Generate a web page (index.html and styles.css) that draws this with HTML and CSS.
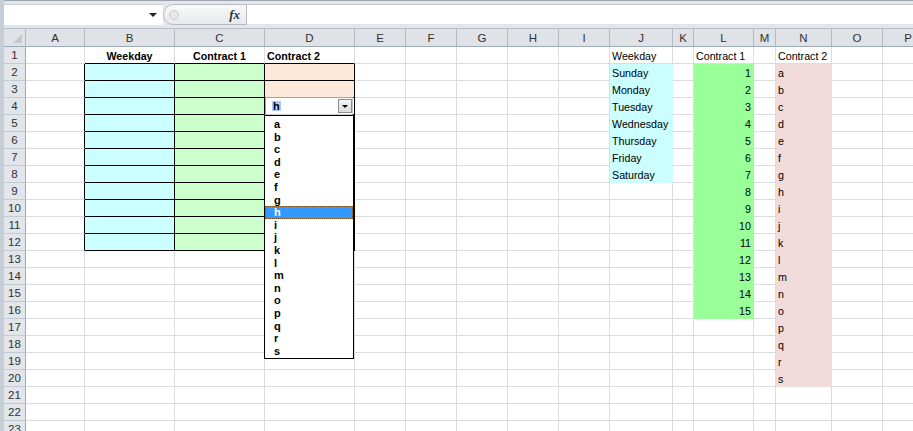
FILE: index.html
```html
<!DOCTYPE html>
<html lang="en">
<head>
  <meta charset="UTF-8" />
  <title>Sheet1</title>
  <link rel="stylesheet" href="styles.css">
</head>
<body>

  <div class="window">
    <div class="formula-bar">
      <div class="name-box"><span class="nb-arrow"></span></div>
      <div class="fx-area"><span class="grip"></span><span class="fx">fx</span></div>
      <div class="formula-input"></div>
    </div>

    <div class="sheet">
      <table class="grid" id="grid"></table>
    </div>
  </div>

  <script>
    const cols = "ABCDEFGHIJKLMNOP".split("");
    const rowCount = 23;
    const days = ["Sunday", "Monday", "Tuesday", "Wednesday", "Thursday", "Friday", "Saturday"];
    const letters = "abcdefghijklmnopqrs".split("");

    const cells = {
      B1: { text: "Weekday", cls: "bold center bb" },
      C1: { text: "Contract 1", cls: "bold center bb" },
      D1: { text: "Contract 2", cls: "bold bb" },
      J1: { text: "Weekday" },
      L1: { text: "Contract 1" },
      N1: { text: "Contract 2" }
    };

    // bordered input table B2:D12
    for (let r = 2; r <= 12; r++) {
      cells["A" + r] = { cls: "br" };
      cells["B" + r] = { cls: "box cyan-lt" };
      cells["C" + r] = { cls: "box green-lt" };
      cells["D" + r] = { cls: "box peach" };
    }
    cells.D4 = { cls: "box open" };

    // lookup lists on the right
    days.forEach((d, i) => cells["J" + (i + 2)] = { text: d, cls: "fill-cyan" });
    for (let n = 1; n <= 15; n++) cells["L" + (n + 1)] = { text: n, cls: "fill-green num" };
    letters.forEach((l, i) => cells["N" + (i + 2)] = { text: l, cls: "fill-pink" });

    function dropdownHtml() {
      const items = letters.map(l =>
        `<li class="${l === "h" ? "picked" : ""}">${l}</li>`).join("");
      return `
        <div class="dd">
          <div class="dd-control">
            <span class="dd-value">h</span>
            <span class="dd-btn"><span class="tri"></span></span>
          </div>
          <ul class="dd-list">${items}</ul>
        </div>`;
    }

    function buildGrid() {
      const grid = document.getElementById("grid");
      let html = '<colgroup><col class="w-rh">';
      cols.forEach(c => html += `<col class="w-${c}">`);
      html += "</colgroup>";

      html += '<tr class="col-head"><th class="corner"><span class="corner-tri"></span></th>';
      cols.forEach(c => html += `<th>${c}</th>`);
      html += "</tr>";

      for (let r = 1; r <= rowCount; r++) {
        html += `<tr><th class="rh">${r}</th>`;
        cols.forEach(c => {
          const cell = cells[c + r] || {};
          const inner = (c + r === "D4") ? dropdownHtml() : (cell.text ?? "");
          html += `<td class="${cell.cls || ""}">${inner}</td>`;
        });
        html += "</tr>";
      }
      grid.innerHTML = html;
    }

    buildGrid();
  </script>

</body>
</html>
```

FILE: styles.css
```css
body {
  margin: 0;
  font-family: "Liberation Sans", Arial, sans-serif;
  background-color: #ffffff;
  overflow: hidden;
}

.window {
  width: 913px;
  height: 431px;
  overflow: hidden;
  box-sizing: border-box;
  border-left: 4px solid #c6ced8;
}

/* formula bar */
.formula-bar {
  display: flex;
  height: 29px;
  box-sizing: border-box;
  padding: 3px 0;
  background-color: #e3e6ea;
  border-top: 1px solid #9ca5b0;
  border-bottom: 1px solid #b8bec6;
}

.name-box {
  width: 159px;
  background: #ffffff;
  border-top: 1px solid #c9ced4;
  position: relative;
}

.nb-arrow {
  position: absolute;
  right: 6px;
  top: 8px;
  border-left: 4px solid transparent;
  border-right: 4px solid transparent;
  border-top: 4px solid #222;
}

.fx-area {
  width: 84px;
  display: flex;
  align-items: center;
  box-sizing: border-box;
  background: linear-gradient(#f8f9fa, #e6e9ec);
  border: 1px solid #b5bbc3;
  border-radius: 11px 0 0 11px;
}

.grip {
  width: 8px;
  height: 8px;
  margin-left: 5px;
  border-radius: 50%;
  background: #e8e8e8;
  border: 1px solid #c9c9c9;
}

.fx {
  margin-left: auto;
  margin-right: 6px;
  font: italic bold 13px "Liberation Serif", serif;
  color: #333;
}

.formula-input {
  flex-grow: 1;
  background: #ffffff;
  border-top: 1px solid #c0c5cc;
  border-bottom: 1px solid #dfe2e6;
}

/* sheet grid */
.sheet {
  height: 402px;
  overflow: hidden;
}

.grid {
  border-collapse: separate;
  border-spacing: 0;
  table-layout: fixed;
  width: 930px;
  font-size: 10.7px;
}

.w-rh { width: 22px; }
.w-A { width: 59px; }
.w-B, .w-C, .w-D { width: 90px; }
.w-E, .w-F, .w-G, .w-H, .w-I { width: 51px; }
.w-J { width: 63px; }
.w-K { width: 21px; }
.w-L { width: 60px; }
.w-M { width: 22px; }
.w-N { width: 56px; }
.w-O, .w-P { width: 51px; }

.grid tr {
  height: 17px;
}

.grid tr.col-head {
  height: 18px;
}

.grid th {
  padding: 0;
  font-size: 11.5px;
  font-weight: normal;
  color: #303030;
  background: #dfe3e8;
  border-right: 1px solid #b3bac3;
  border-bottom: 1px solid #9eaab8;
  text-align: center;
  vertical-align: middle;
  overflow: hidden;
}

.grid th.rh {
  background: #e2e6eb;
  border-right: 1px solid #9eaab8;
  border-bottom: 1px solid #c4cad2;
}

.grid th.corner {
  position: relative;
}

.corner-tri {
  position: absolute;
  right: 3px;
  bottom: 3px;
  border-left: 9px solid transparent;
  border-bottom: 9px solid #c3c8ce;
}

.grid td {
  padding: 0 2px;
  line-height: 13px;
  color: #000;
  white-space: nowrap;
  overflow: hidden;
  vertical-align: bottom;
  border-right: 1px solid #dadcdd;
  border-bottom: 1px solid #dadcdd;
}

.bold { font-weight: bold; }
.center { text-align: center; }
.num { text-align: right; }

/* black borders of the entry table */
.grid td.bb { border-bottom-color: #000; }
.grid td.br { border-right-color: #000; }
.grid td.box {
  border-right-color: #000;
  border-bottom-color: #000;
}

.cyan-lt { background: #ccffff; }
.green-lt { background: #ccffcc; }
.peach { background: #fde9d9; }

.grid td.fill-cyan {
  background: #ccffff;
  border-color: #ccffff;
}

.grid td.fill-green {
  background: #99ff99;
  border-color: #99ff99;
}

.grid td.fill-pink {
  background: #f2dcdb;
  border-color: #f2dcdb;
}

/* dropdown in D4 */
.grid td.open {
  padding: 0;
  overflow: visible;
  background: #ffffff;
}

.dd {
  position: relative;
  height: 16px;
}

.dd-control {
  position: absolute;
  left: 0;
  top: -1px;
  width: 88px;
  height: 18px;
  box-sizing: border-box;
  background: #ffffff;
  border: 1px solid #a3a3a3;
  border-right-color: #c9c9c9;
  border-bottom-color: #c9c9c9;
}

.dd-value {
  position: absolute;
  left: 6px;
  top: 3px;
  padding: 0 1px;
  font-size: 11px;
  font-weight: bold;
  line-height: 10px;
  background: #a9cdf6;
}

.dd-btn {
  position: absolute;
  right: 0;
  top: 1px;
  width: 14px;
  height: 14px;
  box-sizing: border-box;
  background: linear-gradient(#f4f4f4, #dcdcdc);
  border: 1px solid #8e8e8e;
}

.tri {
  position: absolute;
  left: 3px;
  top: 5px;
  border-left: 3px solid transparent;
  border-right: 3px solid transparent;
  border-top: 3px solid #000;
}

.dd-list {
  position: absolute;
  left: -1px;
  top: 17px;
  width: 90px;
  margin: 0;
  padding: 2px 0 1px;
  list-style: none;
  box-sizing: border-box;
  background: #ffffff;
  border: 1px solid #000;
  z-index: 5;
}

.dd-list li {
  height: 12.6px;
  line-height: 12.6px;
  padding-left: 9px;
  font-size: 11px;
  font-weight: bold;
  color: #000;
}

.dd-list li.picked {
  background: #3399ff;
  color: #ffffff;
  outline: 1px dotted #7a4a10;
  outline-offset: -1px;
}
```
